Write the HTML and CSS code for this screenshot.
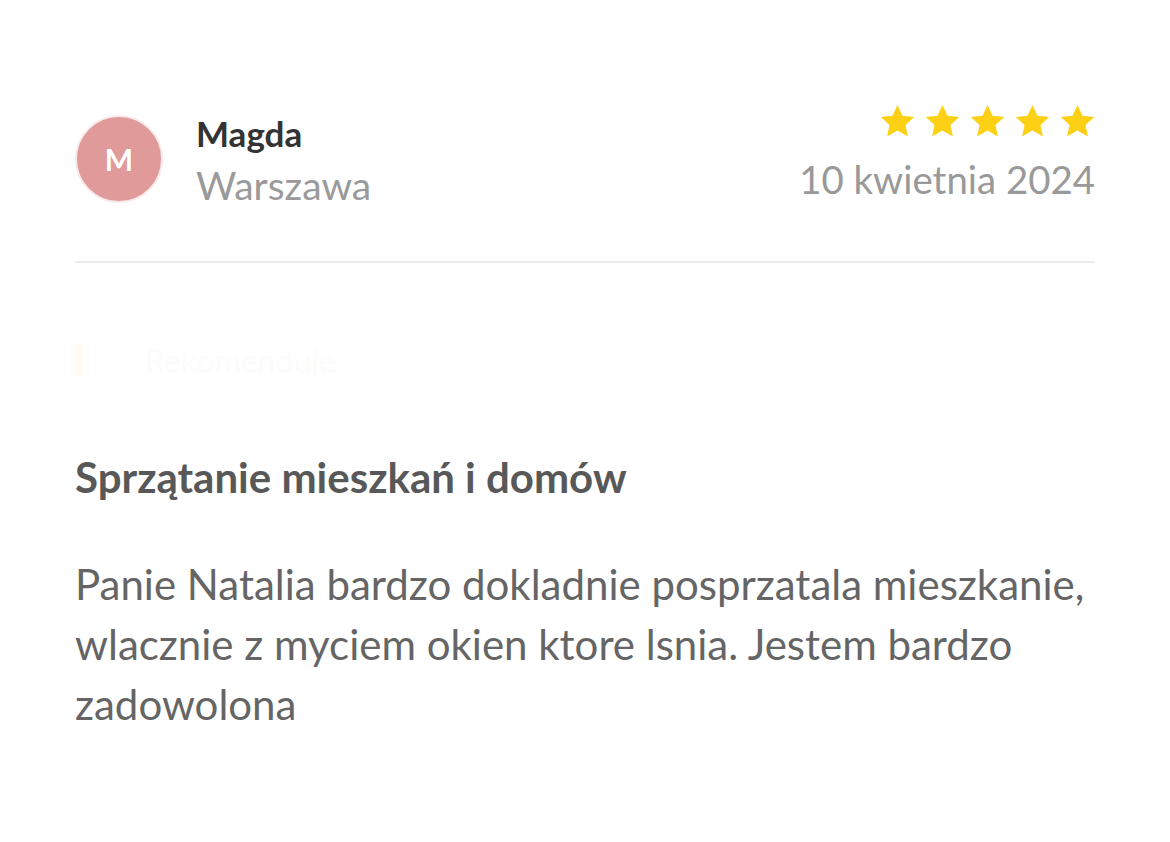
FILE: index.html
```html
<!DOCTYPE html>
<html lang="pl">
<head>
<meta charset="utf-8">
<title>Opinia</title>
<link rel="stylesheet" href="styles.css">
</head>
<body>
<div class="review">
  <div class="header">
    <div class="author">
      <div class="avatar">M</div>
      <div class="who">
        <div class="name">Magda</div>
        <div class="city">Warszawa</div>
      </div>
    </div>
    <div class="meta">
      <div class="stars">
        <svg viewBox="0 0 24 24"><path d="M12 1.8l3.1 6.6 7.2.8-5.4 4.9 1.5 7.1L12 17.6l-6.4 3.6 1.5-7.1L1.7 9.2l7.2-.8z"/></svg>
        <svg viewBox="0 0 24 24"><path d="M12 1.8l3.1 6.6 7.2.8-5.4 4.9 1.5 7.1L12 17.6l-6.4 3.6 1.5-7.1L1.7 9.2l7.2-.8z"/></svg>
        <svg viewBox="0 0 24 24"><path d="M12 1.8l3.1 6.6 7.2.8-5.4 4.9 1.5 7.1L12 17.6l-6.4 3.6 1.5-7.1L1.7 9.2l7.2-.8z"/></svg>
        <svg viewBox="0 0 24 24"><path d="M12 1.8l3.1 6.6 7.2.8-5.4 4.9 1.5 7.1L12 17.6l-6.4 3.6 1.5-7.1L1.7 9.2l7.2-.8z"/></svg>
        <svg viewBox="0 0 24 24"><path d="M12 1.8l3.1 6.6 7.2.8-5.4 4.9 1.5 7.1L12 17.6l-6.4 3.6 1.5-7.1L1.7 9.2l7.2-.8z"/></svg>
      </div>
      <div class="date">10 kwietnia 2024</div>
    </div>
  </div>
  <div class="ghost"><span class="ghost-mark"></span><span class="ghost-text">Rekomenduje</span></div>
  <h2 class="service">Sprzątanie mieszkań i domów</h2>
  <p class="text">Panie Natalia bardzo dokladnie posprzatala mieszkanie, wlacznie z myciem okien ktore lsnia. Jestem bardzo zadowolona</p>
</div>
</body>
</html>
```

FILE: styles.css
```css
* { box-sizing: border-box; }
html, body { margin: 0; padding: 0; background: #fff; }
body { font-family: Lato, "Open Sans", sans-serif; }

.review {
  padding: 100px 75px 0 75px;
}

.header {
  display: flex;
  justify-content: space-between;
  align-items: flex-start;
  padding-bottom: 54px;
  border-bottom: 2px solid #ececec;
}

.author {
  display: flex;
  align-items: flex-start;
  gap: 33px;
}

.avatar {
  width: 88px;
  height: 88px;
  margin-top: 15px;
  border-radius: 50%;
  background: #e09a9a;
  border: 2px solid #f9e9e9;
  color: #fff;
  font-weight: 700;
  font-size: 30px;
  display: flex;
  align-items: center;
  justify-content: center;
}

.who { display: flex; flex-direction: column; padding-top: 11px; }
.name { font-size: 35px; font-weight: 700; color: #333; line-height: 44px; }
.city { font-size: 39px; color: #9a9a9a; line-height: 44px; margin-top: 8px; }

.meta { display: flex; flex-direction: column; align-items: flex-end; }
.stars { display: flex; gap: 6px; margin-top: 2px; margin-right: -2px; }
.stars svg { width: 39px; height: 39px; fill: #fcd014; }
.date { font-size: 38.4px; color: #999; line-height: 44px; margin-top: 16px; }

.ghost {
  display: flex;
  align-items: center;
  gap: 62px;
  height: 40px;
  margin-top: 77px;
}
.ghost-mark { width: 8px; height: 34px; background: #fffcee; }
.ghost-text { font-size: 32px; color: #fcfcfb; }

.service {
  margin: 72px 0 0 0;
  font-size: 42px;
  font-weight: 700;
  color: #585858;
  line-height: 50px;
}

.text {
  margin: 52px 0 0 0;
  font-size: 42px;
  line-height: 60px;
  color: #656565;
}
```
